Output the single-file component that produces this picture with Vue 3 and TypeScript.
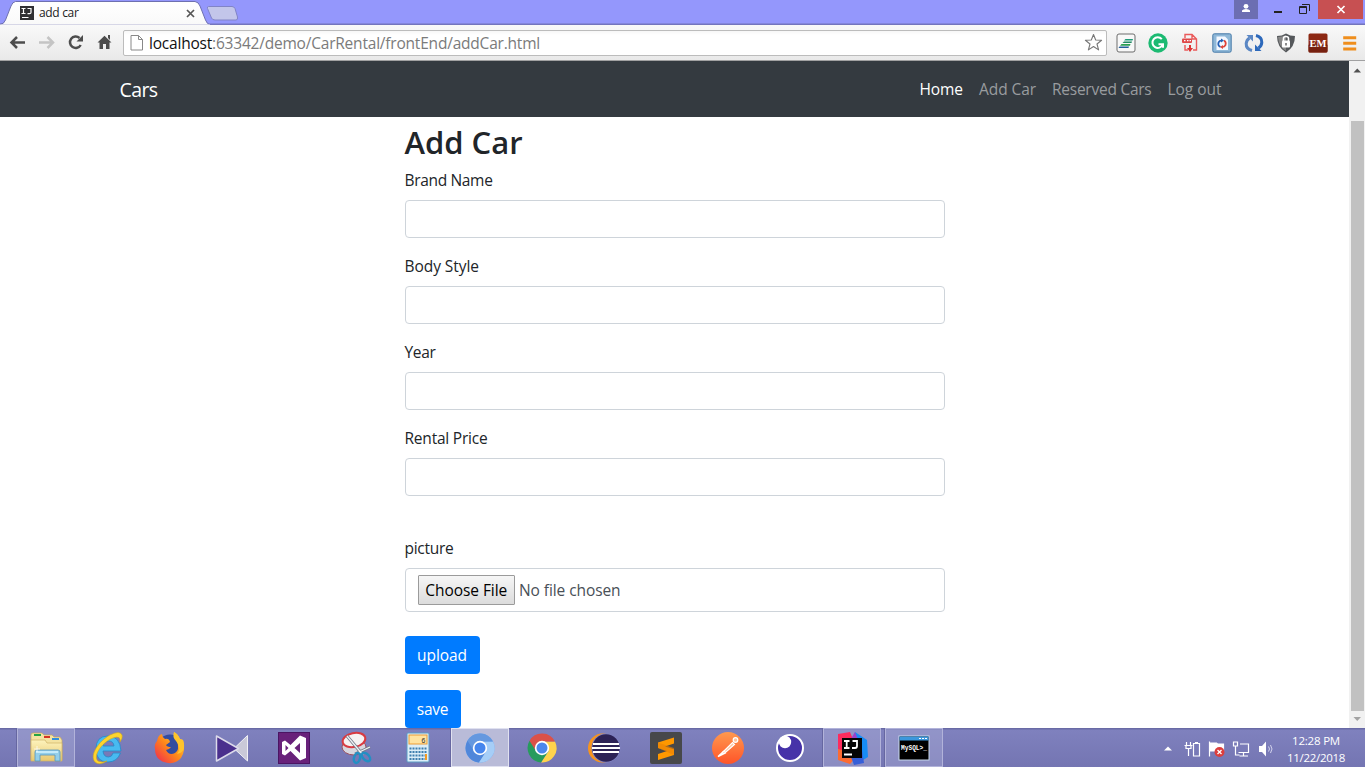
<script setup lang="ts">
import { ref, type Directive } from 'vue'

// Spreads the letters so that the text is as wide as the given number of pixels.
const vFit: Directive<HTMLElement, number> = {
  mounted(el, binding) {
    const range = document.createRange()
    range.selectNodeContents(el)
    const natural = range.getBoundingClientRect().width
    const count = (el.textContent || '').length
    if (count > 0) el.style.letterSpacing = (binding.value - natural) / count + 'px'
  },
}

interface Link { text: string; width: number; active?: boolean }
const links: Link[] = [
  { text: 'Home', width: 43.5, active: true },
  { text: 'Add Car', width: 57 },
  { text: 'Reserved Cars', width: 99.5 },
  { text: 'Log out', width: 54 },
]

interface Field { label: string; width: number }
const fields: Field[] = [
  { label: 'Brand Name', width: 88 },
  { label: 'Body Style', width: 74.5 },
  { label: 'Year', width: 31 },
  { label: 'Rental Price', width: 83 },
]
const values = ref<string[]>(['', '', '', ''])
</script>

<template>
  <div class="screen">
    <header class="titlebar">
      <div class="tab">
        <svg class="tab-shape" width="242" height="25" viewBox="0 0 242 25">
          <defs>
            <linearGradient id="tabg" x1="0" y1="0" x2="0" y2="1">
              <stop offset="0" stop-color="#fff" /><stop offset="1" stop-color="#f9f9f9" />
            </linearGradient>
          </defs>
          <path d="M0 25V24.5Q4 24 5.500 20L11 6Q12.500 2 15.500 1.500H195Q198.500 2 200 6L205.500 20Q207 24 210 25Z" fill="url(#tabg)" stroke="#6e70b0" />
          <path d="M0 25.500H210" stroke="#f9f9f9" stroke-width="2" />
          <path d="M208.500 6.500H232Q234 6.500 235 8.500L237.500 17Q238 20 236 20H215Q212.500 20 211.500 18L207.500 8.500Q207 6.500 208.500 6.500Z" fill="#c3c6ea" stroke="#8184c6" />
        </svg>
        <svg class="favicon" width="14" height="14" viewBox="0 0 14 14">
          <rect width="14" height="14" fill="#303033" />
          <path d="M1.500 2.500h4M3.500 2.500v5M1.500 7.500h4M7.500 2.500h3.500v4q0 1.200-1.500 1.200H7.500M2 11.500h6.500" fill="none" stroke="#fff" stroke-width="1.200" />
        </svg>
        <span v-fit="39.500" class="tab-title">add car</span>
        <svg class="tab-close" width="9" height="9" viewBox="0 0 9 9"><path d="M1 1l7 7M8 1l-7 7" stroke="#555" stroke-width="1.700" /></svg>
      </div>
      <div class="win-buttons">
        <div class="user"><svg width="24" height="19" viewBox="0 0 24 19"><circle cx="12" cy="6.300" r="2.400" fill="#fff" /><path d="M8 12V10.500Q9 9 12 9T16 10.500V12Z" fill="#fff" /></svg></div>
        <svg width="60" height="19" viewBox="0 0 60 19"><path d="M16 12h8" stroke="#222" stroke-width="2" /><path d="M41.500 6.500h7v7h-7zM41 7.500h8M44 4.500h7.500V11" fill="none" stroke="#222" /></svg>
        <div class="close"><svg width="45" height="19" viewBox="0 0 45 19"><path d="M19.500 6l7 7M26.500 6l-7 7" stroke="#fff" stroke-width="1.700" /></svg></div>
      </div>
    </header>

    <div class="toolbar">
      <svg class="nav-icons" width="116" height="35" viewBox="0 0 116 35">
        <path d="M25 17.500H12M17 12L11.500 17.500L17 23" fill="none" stroke="#4d4d4d" stroke-width="2.500" />
        <path d="M39 17.500H52M47.500 12L53 17.500L47.500 23" fill="none" stroke="#c4c4c4" stroke-width="2.500" />
        <path d="M79.500 13A5.700 5.700 0 1 0 80.700 20" fill="none" stroke="#4d4d4d" stroke-width="2.500" />
        <path d="M83 10v6.500h-6.500Z" fill="#4d4d4d" />
        <path d="M97.500 17.500L104.500 10.700L111.500 17.500H109.500V24H106V19H103V24H99.500V17.500Z" fill="#4d4d4d" />
        <path d="M108 10h2v5l-2-2Z" fill="#4d4d4d" />
      </svg>
      <div class="omnibox">
        <svg width="13" height="16" viewBox="0 0 13 16"><path d="M1 .500h7.500l4 4v10.500H1zM8.500.500v4h4" fill="#fff" stroke="#888" /></svg>
        <span class="url"><span v-fit="391"><b>localhost</b>:63342/demo/CarRental/frontEnd/addCar.html</span></span>
        <svg width="19" height="19" viewBox="0 0 19 19"><path d="M9.500 1.500L11.700 7L17.600 7.300L13 11L14.600 16.900L9.500 13.500L4.400 16.900L6 11L1.400 7.300L7.300 7Z" fill="#fff" stroke="#777" stroke-width="1.100" stroke-linejoin="round" /></svg>
      </div>
      <div class="extensions">
        <svg viewBox="0 0 20 20"><rect x="1" y="1" width="18" height="18" rx="2" fill="#f8f8f8" stroke="#6c6c6c" /><path d="M9.500 6H17L16.500 7.500H8Z" fill="#1f9a78" /><path d="M8 8.500H16L15.500 10H6.500Z" fill="#1f8a62" /><path d="M5.500 11H14.500L14 12.700H4Z" fill="#2ba052" /><path d="M3.500 13.500H13L12.500 15H2.500Z" fill="#235f9a" /></svg>
        <svg viewBox="0 0 20 20"><circle cx="10" cy="10" r="9.700" fill="#1cba72" /><path d="M13.800 6.200A5.300 5.300 0 1 0 14.700 11.500M10.500 11.200h4.500v3.500" fill="none" stroke="#fff" stroke-width="2" /></svg>
        <svg viewBox="0 0 20 20"><path d="M5 5V1.500H12L16.500 6V17H13M5 12v5h3M12 1.500V6h4.500" fill="none" stroke="#ea5a5a" stroke-width="1.400" /><rect x="2" y="5.500" width="10" height="4.500" rx="1" fill="#df4949" /><path d="M4 7.700h1.500M7 7.700h1.500M9.500 7.700H11" fill="none" stroke="#fff" stroke-width="1.200" /><path d="M9 12h2v3h2l-3 4L7 15h2Z" fill="#de3434" /></svg>
        <svg viewBox="0 0 20 20"><rect x=".8" y=".8" width="18.400" height="18.400" rx="1.500" fill="#8fb8d8" stroke="#477aa8" /><path d="M4.500 3.500h8.500l3 3v10.500H4.500z" fill="#f3f8ff" /><path d="M8.500 14Q5.500 12.500 6.500 9.500Q7.500 7.500 9.500 7.500" fill="none" stroke="#235fb5" stroke-width="1.700" /><path d="M12 7.500Q14.500 9 13.500 12Q12.500 14 10.500 14" fill="none" stroke="#df4438" stroke-width="1.700" /><path d="M9 5.500v4l3-2Z" fill="#235fb5" /><path d="M11 12v4l-3-2Z" fill="#df4438" /></svg>
        <svg viewBox="0 0 20 20"><path d="M8 17.500Q2 16 2.200 10.500Q2.500 7 5.500 5" fill="none" stroke="#5b87c4" stroke-width="3" /><path d="M2.500 2H9V8.500Z" fill="#5b87c4" /><path d="M12 2.500Q18 4 17.800 9.500Q17.500 13 14.500 15" fill="none" stroke="#2d69bb" stroke-width="3" /><path d="M17.500 18H11V11.500Z" fill="#2d69bb" /></svg>
        <svg viewBox="0 0 20 20"><path d="M1 3Q6 3 10 .5Q14 3 19 3Q19 14 10 19.500Q1 14 1 3Z" fill="#55585b" /><path d="M2 4Q6 4 10 2V18Q3 14 2 4Z" fill="#888" /><rect x="6" y="7.500" width="8" height="7" rx="1" fill="#fff" /><path d="M7.500 8V5.500Q7.500 3.500 10 3.500T12.500 5.500V8" fill="none" stroke="#fff" stroke-width="1.600" /><path d="M10 10v2.500" stroke="#666" stroke-width="1.500" /></svg>
        <svg viewBox="0 0 20 20"><rect x=".5" y=".5" width="19" height="19" rx="1.500" fill="#8c2813" /><rect x=".5" y="11" width="19" height="8.500" rx="1.500" fill="#762010" /><text x="10" y="13.500" text-anchor="middle" textLength="17" lengthAdjust="spacingAndGlyphs" class="em">EM</text></svg>
        <svg viewBox="0 0 20 20"><path d="M3.200 4.700h13M3.200 10.300h13M3.200 15.900h13" stroke="#ef8e1d" stroke-width="3" /></svg>
      </div>
    </div>

    <main class="viewport">
      <div class="page">
        <nav class="navbar">
          <div class="container">
            <a v-fit="38" class="brand">Cars</a>
            <div class="links">
              <a v-for="l in links" :key="l.text" class="link" :class="{ active: l.active }"><span v-fit="l.width">{{ l.text }}</span></a>
            </div>
          </div>
        </nav>
        <form class="form" @submit.prevent>
          <h2><span v-fit="118">Add Car</span></h2>
          <div v-for="(f, i) in fields" :key="f.label" class="group">
            <label><span v-fit="f.width">{{ f.label }}</span></label>
            <input v-model="values[i]" class="control" type="text" />
          </div>
          <div class="group picture">
            <label><span v-fit="49">picture</span></label>
            <div class="control file">
              <button type="button" class="choose"><span v-fit="82">Choose File</span></button>
              <span v-fit="101.500">No file chosen</span>
            </div>
          </div>
          <button type="button" class="btn upload"><span v-fit="50">upload</span></button>
          <button type="button" class="btn save"><span v-fit="31.500">save</span></button>
        </form>
      </div>
      <div class="scrollbar">
        <svg width="16" height="17" viewBox="0 0 16 17"><path d="M4.500 11.500h7.500L8.250 7.500Z" fill="#505050" /></svg>
        <div class="thumb"></div>
        <svg width="16" height="17" viewBox="0 0 16 17"><path d="M4.500 6h7.500L8.250 10Z" fill="#a3a3a3" /></svg>
      </div>
    </main>

    <footer class="taskbar">
      <div class="apps">
        <div class="app open">
          <svg viewBox="0 0 36 36"><defs><linearGradient id="fold" x1="0" y1="0" x2="0" y2="1"><stop offset="0" stop-color="#fdf3bd" /><stop offset="1" stop-color="#e8c86f" /></linearGradient></defs>
            <path d="M3 5Q3 3 5 3H14L16 5H24L26 7H32L34 10V30H3Z" fill="#f4e3a1" stroke="#c5a85d" stroke-width=".7" /><path d="M6 5h7" stroke="#24a443" stroke-width="2" /><path d="M16 7h6" stroke="#d53324" stroke-width="2" /><path d="M24 9h7" stroke="#318edb" stroke-width="2" /><path d="M3 10h14l2 3h15v18H3Z" fill="url(#fold)" stroke="#ceb265" stroke-width=".7" /><path d="M7 31V22Q7 20 9 20H30Q32 20 32 22V31H27V25H12V31Z" fill="#94cfe9" stroke="#5596bb" stroke-width=".8" /><path d="M8 22h22" stroke="#d5f5ff" stroke-width="1.500" /><path d="M9 16v6M6 19h6" stroke="#fff" stroke-width=".7" /></svg>
        </div>
        <div class="app">
          <svg viewBox="0 0 36 36"><path d="M30.500 23Q27 32 18 32Q6 32 6 19T18 6Q30 6 31 21H13Q13.500 27 18.500 27Q22 27 23 23ZM13.200 16H24Q23.500 11 18.500 11T13.200 16Z" fill="#48baf0" stroke="#2389c7" stroke-width=".8" /><path d="M5 32C-1 25 9 11 20 5Q30 0 32 5Q33 8 30 12Q31 5 23 8C14 11 2 25 8 31Q12 33 17 31Q9 36 5 32Z" fill="#ffd42d" stroke="#cfa720" stroke-width=".6" /></svg>
        </div>
        <div class="app">
          <svg viewBox="0 0 36 36"><defs><linearGradient id="fox" x1="1" y1="0" x2="0" y2="1"><stop offset="0" stop-color="#ffe23f" /><stop offset=".5" stop-color="#ff8a19" /><stop offset="1" stop-color="#ee2154" /></linearGradient></defs><circle cx="18" cy="17" r="12.500" fill="#334ca0" /><path d="M5 11Q6 5 10 4Q10 7 13 9Q17 8 18 12L14 15Q15 17 19 17Q17 20 14 20Q17 26 23 23Q28 20 25 11Q22 6 22 2Q26 4 28 9L31 10Q34 20 29 28Q24 34 16 33Q3 31 3 19Q2 14 5 11Z" fill="url(#fox)" /><path d="M22 2Q20 7 24 11Q30 18 25 24Q35 22 31 10L28 9Q26 4 22 2Z" fill="#ffc42c" /></svg>
        </div>
        <div class="app">
          <svg viewBox="0 0 36 36"><path d="M33.500 5.500V31L20 18.500Z" fill="#c9c9d8" stroke="#f0f0f5" /><path d="M2.500 6L24.500 18.500L2.500 31Z" fill="#4a2f8d" stroke="#dcdaea" stroke-width="1.500" stroke-linejoin="round" /></svg>
        </div>
        <div class="app">
          <svg viewBox="0 0 36 36"><rect x="2.500" y="2.500" width="31" height="31" fill="#68217a" stroke="#4b1463" /><path d="M24 5.500L30 8V28L24 30.500L14.500 21L9 25.500L6 24V12L9 10.500L14.500 15ZM24 13L18.500 18L24 23ZM9.500 15V21L12.500 18Z" fill="#fff" fill-rule="evenodd" /></svg>
        </div>
        <div class="app">
          <svg viewBox="0 0 36 36"><ellipse cx="16" cy="17" rx="12" ry="8" fill="#d7d7df" stroke="#9b4e5e" /><ellipse cx="16" cy="10" rx="11.500" ry="7" fill="#f6f2f2" stroke="#d83b42" stroke-width="2" transform="rotate(-12 16 10)" /><path d="M9 6L25 25M17 24L32 17" stroke="#777e89" stroke-width="3" /><path d="M9 6L25 25M17 24L32 17" stroke="#eef1f5" stroke-width="1.300" /><ellipse cx="19" cy="28" rx="3" ry="5" fill="none" stroke="#238fc4" stroke-width="2.500" transform="rotate(15 19 28)" /><ellipse cx="28" cy="27" rx="3" ry="5" fill="none" stroke="#238fc4" stroke-width="2.500" transform="rotate(-45 28 27)" /></svg>
        </div>
        <div class="app">
          <svg viewBox="0 0 36 36"><rect x="7" y="3" width="22" height="29" rx="1" fill="#dceef8" stroke="#5a9bc4" /><rect x="9" y="5" width="18" height="9" fill="#ffe3a0" stroke="#ec9b34" /><text x="25.500" y="12.500" text-anchor="end" class="calc">6</text><path d="M9.500 18.500h17M9.500 22h17M9.500 25.500h17M9.500 29h17" stroke="#3e7faf" stroke-width="2" stroke-dasharray="2 1" /><path d="M26 24v6" stroke="#f29a22" stroke-width="2" /></svg>
        </div>
        <div class="app open current">
          <svg viewBox="0 0 36 36"><circle cx="18" cy="18" r="14.500" fill="#6aa7f1" /><path d="M18 18L5.500 10.700A14.500 14.500 0 0 0 17 32.500L24.500 21Z" fill="#5087da" /><path d="M18 11.500H31A14.500 14.500 0 0 1 17 32.500L24.500 21Z" fill="#a6cef7" /><path d="M18 11.500H31A14.500 14.500 0 0 0 5.500 10.700L12 21Z" fill="#6598df" /><circle cx="18" cy="18" r="7.200" fill="#fff" /><circle cx="18" cy="18" r="5.500" fill="#4686ed" /></svg>
        </div>
        <div class="app">
          <svg viewBox="0 0 36 36"><path d="M18 11.500H31A14.500 14.500 0 0 1 17 32.500L24.500 21Z" fill="#ffd34d" /><path d="M18 18L5.500 10.700A14.500 14.500 0 0 0 17 32.500L24.500 21Z" fill="#279b5d" /><path d="M18 11.500H31A14.500 14.500 0 0 0 5.500 10.700L12 21Z" fill="#db5148" /><circle cx="18" cy="18" r="7.200" fill="#fff" /><circle cx="18" cy="18" r="5.500" fill="#4b87ed" /></svg>
        </div>
        <div class="app">
          <svg viewBox="0 0 36 36"><circle cx="16.500" cy="18" r="14.500" fill="#f7941e" /><circle cx="20" cy="18" r="14.500" fill="#8083c2" /><circle cx="20" cy="18" r="13.700" fill="#2c2255" /><path d="M7 14h26M6 18h28M7 22h26" stroke="#fff" stroke-width="2" /></svg>
        </div>
        <div class="app">
          <svg viewBox="0 0 36 36"><rect x="2" y="2" width="32" height="32" rx="2" fill="#47484a" /><path d="M26 7.500V13.500L17 16.500L26 19.200V25L10 30V24L19 21L10 18V12.500Z" fill="#ff9800" /><path d="M10 12.500L26 18v7L10 18Z" fill="#e98105" opacity=".6" /></svg>
        </div>
        <div class="app">
          <svg viewBox="0 0 36 36"><defs><linearGradient id="post" x1="0" y1="0" x2="0" y2="1"><stop offset="0" stop-color="#ff994f" /><stop offset="1" stop-color="#ff5428" /></linearGradient></defs><circle cx="18" cy="18" r="16" fill="url(#post)" /><circle cx="25.500" cy="10" r="2.300" fill="#ffc6a0" stroke="#fff" stroke-width="1.200" /><path d="M13 22L22.500 12.500L24.500 14.500L16 22Z" fill="#ffc6a0" stroke="#fff" stroke-width="1.200" /><path d="M14 21L8 26.500L16 22.500" fill="none" stroke="#fff" stroke-width="1.400" /></svg>
        </div>
        <div class="app">
          <svg viewBox="0 0 36 36"><circle cx="18" cy="18" r="13" fill="#4632a8" stroke="#fff" stroke-width="2" /><circle cx="13" cy="12" r="6.200" fill="#fff" /></svg>
        </div>
        <div class="app open">
          <svg viewBox="0 0 36 36"><path d="M4 4L16 2L20 12L14 26L4 19Z" fill="#fd2b5e" /><path d="M21 2L33 10L34 27L24 33L15 25Z" fill="#178cf4" /><path d="M15 12L21 2L27 17Z" fill="#9a42c9" /><path d="M4 19L4 30L16 34L24 25Z" fill="#fc6b32" /><path d="M28 20L30 33L20 35L17 27Z" fill="#365fd9" /><rect x="8" y="8" width="20" height="20" fill="#050505" /><path d="M10 11h5.500M12.700 11v7M10 18h5.500M18.500 11h4.500v5q0 2-2 2H18M10 24.500h8" fill="none" stroke="#fff" stroke-width="1.800" /></svg>
        </div>
        <div class="app open">
          <svg viewBox="0 0 36 36"><rect x="3" y="6" width="30" height="24" fill="#000" stroke="#c8d9ed" /><path d="M3.500 8.500h29" stroke="#3b97dc" stroke-width="4" /><path d="M23 8.500h2M26 8.500h2M29 8.500h2" stroke="#fff" /><text x="5" y="20" textLength="26" lengthAdjust="spacingAndGlyphs" class="sql">MySQL&gt;_</text></svg>
        </div>
      </div>
      <div class="tray">
        <svg class="tray-icons" width="118" height="24" viewBox="0 0 118 24">
          <path d="M5 13.500h8L9 9.500Z" fill="#fff" />
          <g fill="none" stroke="#fff" stroke-width="1.200">
            <path d="M27.500 5v3M31.500 5v3M25.500 8.500h8M27 8.500v3h5v-3M29.500 11v8" />
            <path d="M34.500 6.500h6v12.500h-6zM36 5.500h3" />
            <path d="M50.500 4.500V19.500" /><path d="M51.500 6h6l1 1h6v7h-13Z" fill="#fff" />
            <path d="M81 7h8.500v8.500H79.500M84.500 16v3M80.500 19h8.500M74.500 5h4v4h-4zM76.500 9v9h4" />
          </g>
          <circle cx="60.500" cy="15" r="5" fill="#dc3e3d" /><path d="M58.500 13l4 4M62.500 13l-4 4" stroke="#fff" stroke-width="1.300" />
          <path d="M100 9h3l4-4.500v15l-4-4.500h-3Z" fill="#fff" /><path d="M109.500 9.500q2 2.500 0 5M111.500 8q3 4 0 8" fill="none" stroke="#d4d4ed" />
        </svg>
        <div class="clock"><span v-fit="48">12:28 PM</span><span v-fit="58">11/22/2018</span></div>
      </div>
    </footer>
  </div>
</template>

<style>
body { margin: 0; overflow: hidden; }
</style>

<style scoped>
* { box-sizing: border-box; }
.screen { width: 1365px; height: 767px; display: flex; flex-direction: column; overflow: hidden; background: #fff; font-family: "Open Sans", "Noto Sans", sans-serif; }
svg { display: block; flex: none; }
span { white-space: nowrap; }
.titlebar { height: 25px; flex: none; display: flex; justify-content: space-between; background: linear-gradient(#9497fc 0 23px, #7375bd 24px, #7375bd); }
.tab { position: relative; width: 242px; height: 25px; display: flex; align-items: center; padding-left: 20px; }
.tab-shape { position: absolute; left: 0; top: 0; }
.favicon, .tab-title, .tab-close { position: relative; }
.tab-title { margin-left: 5px; width: 147px; font-size: 12px; line-height: 24px; color: #222; }
.tab-close { margin-top: 2px; }
.win-buttons { display: flex; margin-right: 2px; }
.user { height: 19px; background: #6c6eb2; }
.close { height: 19px; background: #c75052; }
.toolbar { height: 36px; flex: none; display: flex; align-items: center; background: linear-gradient(#f9f9f9, #e9e9e9); border-bottom: 1px solid #a1a1a2; }
.omnibox { display: flex; align-items: center; margin-left: 7px; width: 984px; height: 26px; padding: 0 3px 0 6px; background: linear-gradient(#f7f7f7, #fff 4px); border: 1px solid #bcbcbc; border-radius: 2px; }
.url { flex: 1; margin-left: 6px; font-size: 15.5px; line-height: 24px; color: #7b7b7b; }
.url b { font-weight: 400; color: #111; }
.extensions { display: flex; margin-left: 3px; margin-right: -5px; }
.extensions svg { width: 20px; height: 20px; margin: 0 6px; }
.em { font: 700 11px "Liberation Serif", serif; fill: #fff; }
.viewport { height: 667px; flex: none; display: flex; overflow: hidden; }
.page { width: 1349px; }
.navbar { height: 56px; background: #343a40; }
.container { width: 1140px; height: 56px; margin: 0 auto; padding: 0 15px; display: flex; align-items: center; justify-content: space-between; }
.brand { font-size: 19.5px; line-height: 30px; color: #fff; padding-top: 2px; }
.links { display: flex; margin-right: 0; }
.link { padding: 0 8px; font-size: 15.5px; line-height: 24px; color: #999c9f; }
.link.active { color: #fff; }
.form { width: 540px; margin: 0 auto; padding-top: 5px; color: #212529; font-size: 15.5px; }
h2 { margin: 0 0 7px; padding-top: 1px; font-size: 31px; font-weight: 600; line-height: 38px; }
.group { margin-bottom: 16px; }
.picture { padding-top: 24px; margin-bottom: 24px; }
label { display: block; height: 24px; line-height: 24px; margin-bottom: 8px; }
.control { display: block; width: 100%; height: 38px; padding: 6px 12px; background: #fff; border: 1px solid #ced4da; border-radius: 4px; font: inherit; color: #495057; outline: none; }
.file { height: 44px; display: flex; align-items: center; gap: 4px; }
.choose { height: 30px; width: 97.5px; padding: 0 0 1px; border: 1px solid #9b9b9b; border-radius: 1px; background: linear-gradient(#f6f6f6, #dcdcdc); font: inherit; color: #000; }
.btn { display: block; height: 38px; padding: 0; border: 0; border-radius: 4px; background: #007bff; color: #fff; font: inherit; line-height: 36px; text-align: center; }
.upload { width: 75px; margin-bottom: 16px; }
.save { width: 56px; }
.scrollbar { width: 16px; display: flex; flex-direction: column; background: #f1f1f1; }
.thumb { height: 590px; margin: 43px 1px 0 2px; background: #c1c1c1; }
.taskbar { height: 39px; flex: none; display: flex; justify-content: space-between; background: linear-gradient(#696aa5 0 1px, #7f81be 2px, #7475b2); }
.apps { display: flex; padding-left: 17px; }
.app { width: 58px; height: 39px; margin-right: 4px; display: flex; justify-content: center; padding-top: 2px; }
.app svg { width: 36px; height: 36px; }
.open { background: rgba(175, 178, 218, .4); border: 1px solid #b2b3da; box-shadow: -1px 0 0 #6667a1; padding-top: 1px; }
.current { background: #b9bbd8; border-color: #e0e1f0; }
.calc { font: 7px "Liberation Mono", monospace; fill: #333; }
.sql { font: 700 8px "Liberation Mono", monospace; fill: #fff; }
.tray { display: flex; align-items: center; padding: 2px 15px 0 0; }
.clock { width: 68px; display: flex; flex-direction: column; align-items: center; color: #fff; font-size: 11.5px; line-height: 17px; }
.tray-icons { margin-right: 5px; }
</style>
